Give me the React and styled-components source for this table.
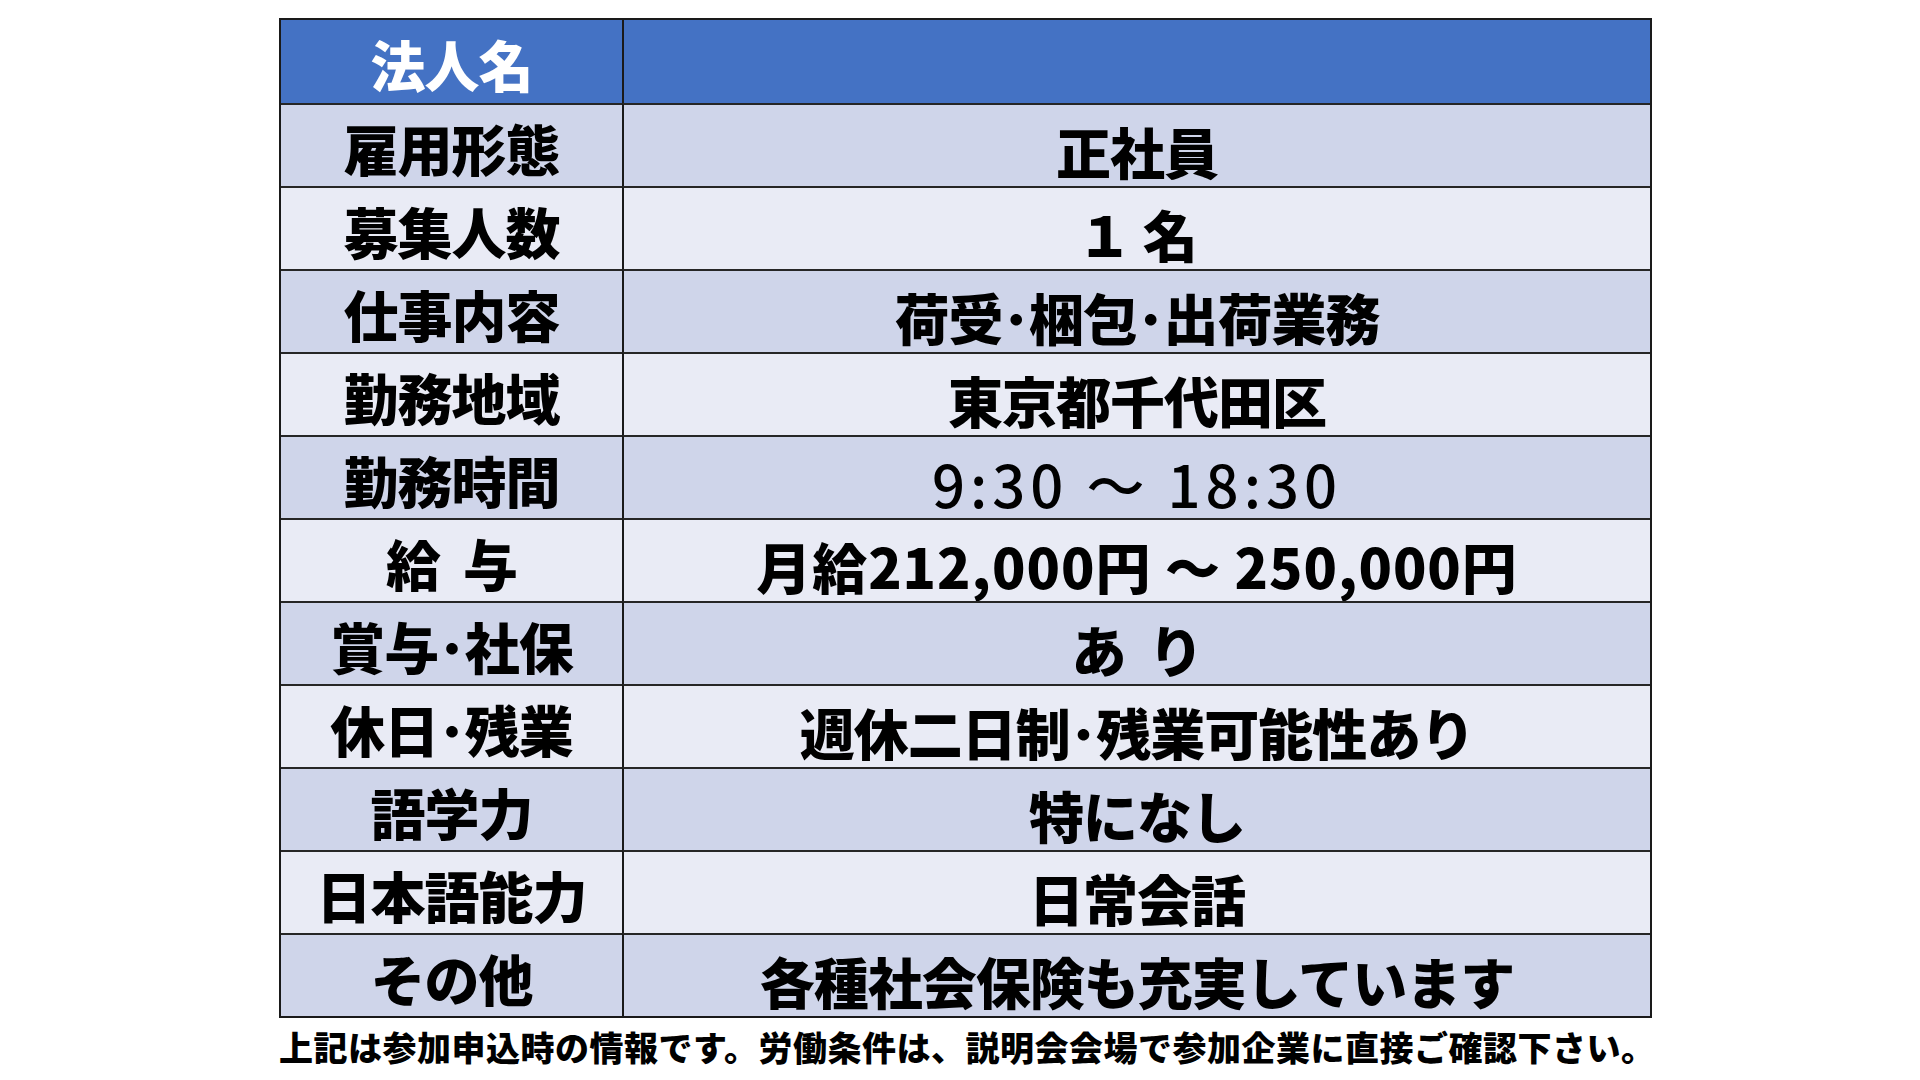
import React from 'react';
import styled, { createGlobalStyle } from 'styled-components';

const GlobalStyle = createGlobalStyle`
  body {
    margin: 0;
    background: #ffffff;
    font-family: "Noto Sans CJK JP", "Noto Sans", sans-serif;
  }
`;

const Page = styled.div`
  width: 1920px;
  height: 1080px;
  padding: 18px 0 0 279px;
  box-sizing: border-box;
`;

const Table = styled.div`
  display: grid;
  grid-template-columns: 341px 1fr;
  grid-auto-rows: 83px;
  width: 1373px;
  border: 2px solid #1a1a1a;
  box-sizing: border-box;
`;

const Cell = styled.div`
  display: flex;
  align-items: center;
  justify-content: center;
  background: ${props => props.bg};
  color: ${props => (props.head ? '#ffffff' : '#000000')};
  border-top: ${props => (props.first ? '0' : '2px solid #262626')};
  border-left: ${props => (props.right ? '2px solid #1a1a1a' : '0')};
  font-size: 55px;
  font-weight: 900;
  line-height: 1;
  padding-top: ${props => (props.right ? '10px' : '4px')};
  box-sizing: border-box;
  white-space: pre;
  letter-spacing: -1px;
`;

const Num = styled.span`
  font-weight: ${props => (props.light ? 500 : 900)};
  font-size: ${props => (props.light ? '58px' : '55px')};
  letter-spacing: ${props => (props.light ? '5px' : '1px')};
`;

const Note = styled.p`
  margin: 12px 0 0;
  font-size: 34px;
  font-weight: 900;
  line-height: 1;
  letter-spacing: 0.5px;
  color: #000;
`;

const rows = [
  ['雇用形態', '正社員'],
  ['募集人数', '１ 名'],
  ['仕事内容', '荷受･梱包･出荷業務'],
  ['勤務地域', '東京都千代田区'],
  ['勤務時間', <Num light key="t">9:30 ～ 18:30</Num>],
  ['給  与', <Num key="s">月給212,000円 ～ 250,000円</Num>],
  ['賞与･社保', 'あ  り'],
  ['休日･残業', '週休二日制･残業可能性あり'],
  ['語学力', '特になし'],
  ['日本語能力', '日常会話'],
  ['その他', '各種社会保険も充実しています'],
];

export default function App() {
  return (
    <Page>
      <GlobalStyle />
      <Table>
        <Cell head first bg="#4472c4">法人名</Cell>
        <Cell head first right bg="#4472c4" />
        {rows.map(([label, value], i) => {
          const bg = i % 2 === 0 ? '#cfd5ea' : '#e9ebf5';
          return (
            <React.Fragment key={i}>
              <Cell bg={bg}>{label}</Cell>
              <Cell right bg={bg}>{value}</Cell>
            </React.Fragment>
          );
        })}
      </Table>
      <Note>上記は参加申込時の情報です。労働条件は、説明会会場で参加企業に直接ご確認下さい。</Note>
    </Page>
  );
}
